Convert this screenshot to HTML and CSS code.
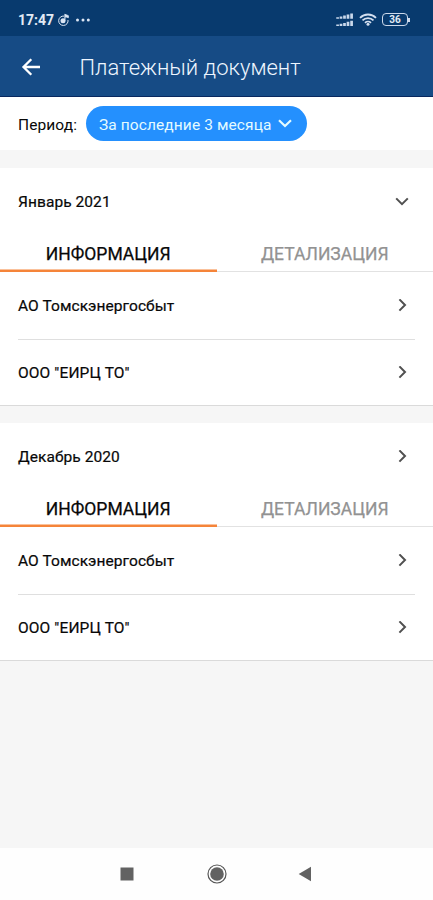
FILE: index.html
```html
<!DOCTYPE html>
<html lang="ru">
<head>
<meta charset="utf-8">
<meta name="viewport" content="width=device-width, initial-scale=1">
<title>Платежный документ</title>
<link rel="stylesheet" href="styles.css">
</head>
<body>
<div class="status">
  <span class="clock">17:47</span>
  <svg class="note" width="12" height="14" viewBox="0 0 12 14"><path d="M6 3.1A4.7 4.7 0 1 0 10 7" fill="none" stroke="#dce6f4" stroke-width="1"/><circle cx="5" cy="7.8" r="2.5" fill="#dce6f4"/><path d="M6.8 8V1.2l3.6 1.5v2L7.7 3.8" fill="#dce6f4" stroke="#dce6f4" stroke-width=".8"/></svg>
  <svg class="dots" width="16" height="4" viewBox="0 0 16 4" fill="#dce6f4"><circle cx="2.5" cy="2" r="1.5"/><circle cx="8" cy="2" r="1.5"/><circle cx="13.3" cy="2" r="1.5"/></svg>
  <div class="system">
    <svg width="18" height="14" viewBox="0 0 18 14" fill="none" stroke="#c9d8eb" stroke-width="2.7"><path d="M1.6 4.2v1.5M5 3.4v2.3M8.5 2.5v3.2M12 1.5v4.2M15.6.5v5.2M1.6 11.6v1.5M5 10.8v2.3M8.5 9.9v3.2M12 8.8v4.3M15.6 7.8v5.3"/></svg>
    <svg class="wifi" width="18" height="13" viewBox="0 0 18 13" fill="none" stroke="#d3dff0" stroke-width="1.8"><path d="M1 4.8a11.4 11.4 0 0 1 16 0M3.5 7.4a7.8 7.8 0 0 1 11 0M6 9.8a4.4 4.4 0 0 1 6 0"/><circle cx="9" cy="11.3" r="1.5" fill="#d3dff0" stroke="none"/></svg>
    <div class="battery"><span>36</span></div>
  </div>
</div>
<header class="appbar">
  <svg width="20" height="20" viewBox="0 0 20 20" fill="none" stroke="#fff" stroke-width="2.3"><path d="M10.3 2.2 2.5 10l7.8 7.8M2.8 10H19"/></svg>
  <h1>Платежный документ</h1>
</header>
<div class="filter">
  <span class="label">Период:</span>
  <button class="pill"><span>За последние 3 месяца</span><svg width="14" height="10" viewBox="0 0 14 10" fill="none" stroke="#e4fbff" stroke-width="2.2"><path d="m1 1.2 6 5.8 6-5.8"/></svg></button>
</div>
<main>
  <section class="card">
    <div class="head"><span>Январь 2021</span><svg width="14" height="14" viewBox="0 0 14 14"><path d="m1.2 3.4 5.8 5.8 5.8-5.8"/></svg></div>
    <div class="tabs"><div class="tab active"><span>ИНФОРМАЦИЯ</span></div><div class="tab"><span>ДЕТАЛИЗАЦИЯ</span></div></div>
    <div class="row"><span>АО Томскэнергосбыт</span><svg width="14" height="14" viewBox="0 0 14 14"><path d="m4.4.4 5.6 5.6-5.6 5.6"/></svg></div>
    <div class="row"><span class="eirc">ООО "ЕИРЦ ТО"</span><svg width="14" height="14" viewBox="0 0 14 14"><path d="m4.4.4 5.6 5.6-5.6 5.6"/></svg></div>
  </section>
  <section class="card">
    <div class="head"><span>Декабрь 2020</span><svg width="14" height="14" viewBox="0 0 14 14"><path d="m4.4.4 5.6 5.6-5.6 5.6"/></svg></div>
    <div class="tabs"><div class="tab active"><span>ИНФОРМАЦИЯ</span></div><div class="tab"><span>ДЕТАЛИЗАЦИЯ</span></div></div>
    <div class="row"><span>АО Томскэнергосбыт</span><svg width="14" height="14" viewBox="0 0 14 14"><path d="m4.4.4 5.6 5.6-5.6 5.6"/></svg></div>
    <div class="row"><span class="eirc">ООО "ЕИРЦ ТО"</span><svg width="14" height="14" viewBox="0 0 14 14"><path d="m4.4.4 5.6 5.6-5.6 5.6"/></svg></div>
  </section>
</main>
<nav class="navbar">
  <svg width="14" height="14" viewBox="0 0 14 14"><path d="M.5.5h13v13H.5z" fill="#626262"/></svg>
  <svg width="21" height="20" viewBox="0 0 21 20"><circle cx="11" cy="10" r="9" fill="none" stroke="#555" stroke-width="1.2"/><circle cx="11" cy="10" r="6.8" fill="#626262"/></svg>
  <svg width="14" height="16" viewBox="0 0 14 16"><path d="M.7 8 13 .8v14.4z" fill="#626262"/></svg>
</nav>
</body>
</html>
```
FILE: styles.css
```css
* { box-sizing: border-box; }
body {
  margin: 0;
  height: 900px;
  display: flex;
  flex-direction: column;
  overflow: hidden;
  background: #f6f6f6;
  font-family: Roboto, "Noto Sans", sans-serif;
  color: #080808;
}
svg { display: block; flex: none; }
.status {
  height: 36px;
  padding: 3px 25px 0 18px;
  display: flex;
  align-items: center;
  background: #083a6e;
  color: #e2eaf5;
}
.clock { width: 40px; font-size: 14px; font-weight: 700; }
.dots { margin-left: 5px; }
.system { margin-left: auto; display: flex; align-items: center; }
.wifi { margin: 0 5px; }
.battery {
  position: relative;
  width: 26px;
  height: 13px;
  display: flex;
  align-items: center;
  justify-content: center;
  border: 1.5px solid #ccd9eb;
  border-width: 1.5px;
  border-radius: 4px;
  font-size: 10px;
  font-weight: 700;
  line-height: 11px;
}
.battery::after {
  content: "";
  position: absolute;
  right: -3px;
  top: 4px;
  width: 2px;
  height: 4px;
  background: #ccd9eb;
}
.appbar {
  height: 61px;
  padding: 1px 0 0 21px;
  display: flex;
  align-items: center;
  gap: 38.5px;
  background: #164b85;
  border-bottom: 1px solid #08285f;
  color: #eef6ff;
}
.appbar h1 { margin: 1px 0 0; font-size: 22px; font-weight: 300; white-space: nowrap; }
.filter {
  height: 53px;
  padding-left: 18px;
  display: flex;
  align-items: center;
  background: #fff;
  font-size: 15.5px;
}
.label { width: 68px; padding-top: 2px; letter-spacing: .1px; }
.pill {
  width: 221px;
  height: 35px;
  padding: 0 15px 0 13px;
  display: flex;
  align-items: center;
  justify-content: space-between;
  border: 0;
  border-radius: 18px;
  background: #2490fe;
  color: #e4fbff;
  font: 15.5px Roboto, "Noto Sans", sans-serif;
  letter-spacing: .1px;
  white-space: nowrap;
}
.pill span { padding-top: 2px; }
.card {
  margin-top: 17px;
  height: 238px;
  background: #fff;
  border-bottom: 1px solid #dadada;
}
.card:first-child { margin-top: 18px; }
.head, .row {
  display: flex;
  align-items: center;
  justify-content: space-between;
  font-size: 15.5px;
  font-weight: 400;
  letter-spacing: .07px;
  -webkit-text-stroke: .2px currentColor;
}
.head { height: 67px; padding: 0 24px 0 18px; }
.row { height: 66px; margin: 0 18px; padding-right: 6px; }
.eirc { letter-spacing: .13px; }
.tabs + .row { height: 68px; border-bottom: 1px solid #dfdfdf; }
.head path, .row path { fill: none; stroke: #505050; stroke-width: 2; }
.tabs { height: 37px; display: flex; border-bottom: 1px solid #e2e2e2; }
.tab {
  flex: 1;
  height: 37px;
  display: flex;
  align-items: center;
  justify-content: center;
  font-size: 17.5px;
  font-weight: 400;
  color: #929292;
  -webkit-text-stroke: .25px currentColor;
}
.active { color: #080808; box-shadow: inset 0 -2.5px #f58439; }
.navbar {
  margin-top: auto;
  height: 52px;
  padding: 0 121px 0 120px;
  display: flex;
  align-items: center;
  justify-content: space-between;
  background: #fefefe;
}
```
